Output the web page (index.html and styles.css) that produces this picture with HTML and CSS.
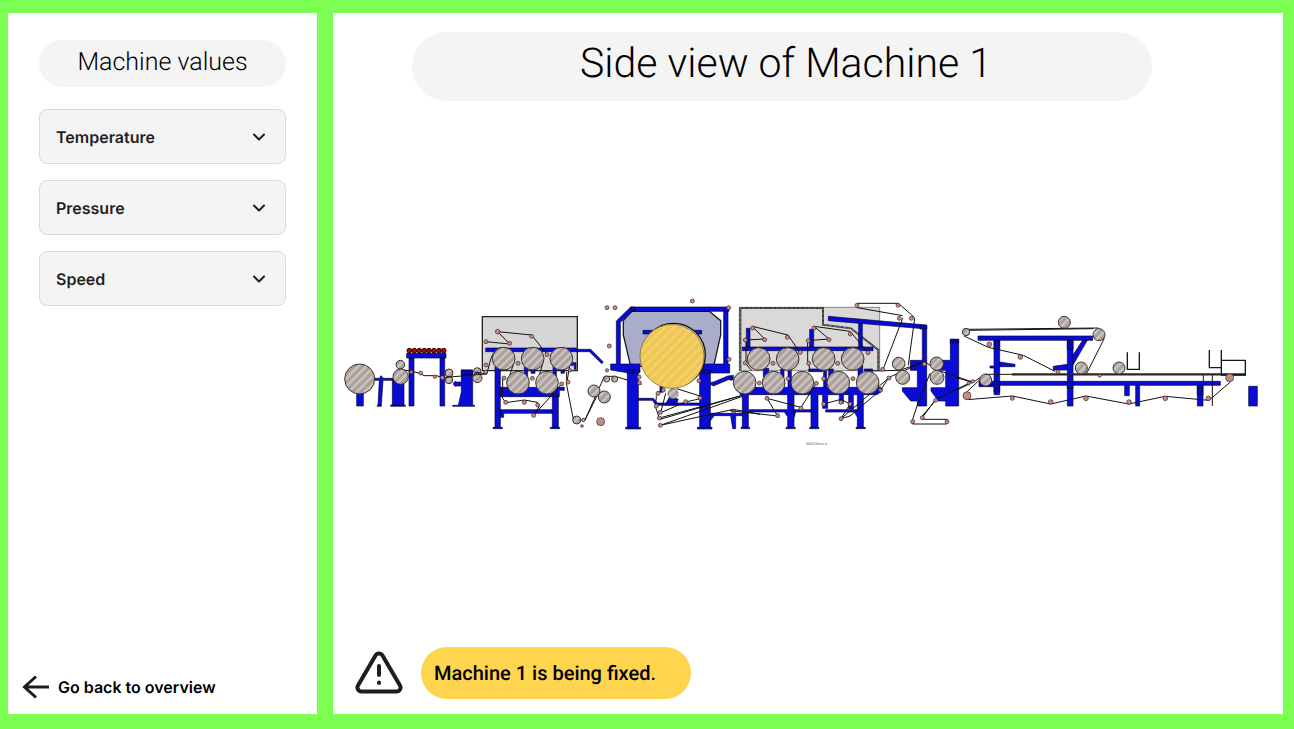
FILE: index.html
```html
<!DOCTYPE html>
<html lang="en">
<head>
<meta charset="utf-8">
<title>Machine 1</title>
<link rel="stylesheet" href="styles.css">
</head>
<body>
<div class="app">
  <aside class="panel sidebar">
    <h2 class="pill sidebar-title">Machine values</h2>
    <div class="values">
      <button class="value" type="button" aria-expanded="false">Temperature
        <svg class="chevron" viewBox="0 0 16 16"><path d="M3 5.5l5 5 5-5"/></svg></button>
      <button class="value" type="button" aria-expanded="false">Pressure
        <svg class="chevron" viewBox="0 0 16 16"><path d="M3 5.5l5 5 5-5"/></svg></button>
      <button class="value" type="button" aria-expanded="false">Speed
        <svg class="chevron" viewBox="0 0 16 16"><path d="M3 5.5l5 5 5-5"/></svg></button>
    </div>
    <a class="back" href="#overview">
      <svg class="arrow" viewBox="0 0 28 26"><path d="M27 13H3M14 2.5L2.5 13 14 23.500"/></svg>
      Go back to overview</a>
  </aside>
  <main class="panel view">
    <h1 class="pill view-title">Side view of Machine 1</h1>
    <div class="stage">
      <svg class="machine" viewBox="0 0 2775 507" role="img" aria-label="Side view drawing of the machine">
        <defs>
          <pattern id="hatch" width="17" height="17" patternUnits="userSpaceOnUse" patternTransform="rotate(45)">
            <rect width="17" height="17" fill="#cec4bf"/><path d="M3 0V17M8 0V17" stroke="#544d4a" stroke-width="1.500"/>
          </pattern>
          <pattern id="gold" width="20" height="20" patternUnits="userSpaceOnUse" patternTransform="rotate(45)">
            <rect width="20" height="20" fill="#f7d060"/><path d="M3 0V20M9 0V20" stroke="#c9a646" stroke-width="1.500"/>
          </pattern>
          <pattern id="pink" width="6" height="6" patternUnits="userSpaceOnUse" patternTransform="rotate(45)">
            <rect width="6" height="6" fill="#dba19d"/><path d="M2 0V6" stroke="#7a4a48" stroke-width="1.500"/>
          </pattern>
          <pattern id="dark" width="8" height="8" patternUnits="userSpaceOnUse" patternTransform="rotate(45)">
            <rect width="8" height="8" fill="#0b0bd6"/><path d="M2 0V8" stroke="#000040" stroke-width="2"/>
          </pattern>
        </defs>

        <!-- unwind stand and roof frame -->
        <g>
          <g class="steel">
            <path d="M50 305h20v43H50zM103 265h15l5-8 8 8h28v6h-30l-5 75h-10l4-75h-15zM157 270h35v76h-35zM152 345h44v4h-44zM112 345h12v4h-12z"/>
            <path d="M200 190h118v14H200zM207 204h15v144h-15zM300 204h14v144h-14zM364 240h34v106h6v3h-66v-3h17l9-40v-18h-14c-12 6-12-20 0-12h14z"/>
          </g>
          <path class="hatched" d="M364 240h34v14h-34z"/>
          <g class="red"><circle cx="208" cy="182" r="7"/><circle cx="223" cy="182" r="7"/><circle cx="238" cy="182" r="7"/><circle cx="253" cy="182" r="7"/><circle cx="267" cy="182" r="7"/><circle cx="282" cy="182" r="7"/><circle cx="297" cy="182" r="7"/><circle cx="311" cy="182" r="7"/></g>
          <g class="roll"><circle cx="59" cy="267" r="45"/><circle cx="181" cy="224" r="13"/><circle cx="182" cy="260" r="23"/><circle cx="327" cy="249" r="12"/><circle cx="327" cy="270" r="11"/><circle cx="412" cy="244" r="11"/><circle cx="412" cy="264" r="14"/></g>
          <path class="web" d="M192 240L213 243 240 250 252 257H290L307 263 412 254 440 252"/>
          <g class="idler"><circle cx="214" cy="246" r="5"/><circle cx="242" cy="249" r="6"/><circle cx="285" cy="260" r="5"/><circle cx="307" cy="263" r="6"/></g>
        </g>

        <!-- first dryer section -->
        <g transform="translate(405 0)">
          <path class="hood" d="M22 80H307V242H22z"/>
          <g class="steel">
            <path d="M32 174H304V185H32zM304 178H347L385 216 380 221 343 185H304zM60 230H76V412H60zM54 412h28v4H54zM232 315H250V412H232zM226 412h28v4h-28zM76 292H268V301H253V320H76zM76 359H232V370H115V370H86V382H76zM148 230h10v40h-10zM234 230h10v40h-10zM258 240h10v10h-10zM168 240h12v10h-12zM285 218h18v20h-5v-12h-13z"/>
          </g>
          <path class="web" d="M32 155L104 162 68 125 170 135 216 193 M0 246L35 252 48 205Q60 172 86 172M83 265V325L92 338 148 330 188 337 192 350 176 376 260 282M116 220L97 278M203 220L187 278M275 245V285L295 388M330 390L370 310M330 390L388 259H420L500 283M277 270L285 220"/>
          <g class="roll"><circle cx="86" cy="206" r="34"/><circle cx="173" cy="206" r="34"/><circle cx="259" cy="206" r="34"/><circle cx="129" cy="278" r="34"/><circle cx="216" cy="278" r="34"/><circle cx="357" cy="303" r="18"/><circle cx="388" cy="321" r="18"/><circle cx="305" cy="390" r="12"/><circle cx="325" cy="390" r="5"/><circle cx="395" cy="267" r="9"/><circle cx="419" cy="267" r="9"/></g>
          <g class="idler"><circle cx="33" cy="155" r="6"/><circle cx="68" cy="125" r="7"/><circle cx="104" cy="160" r="6"/><circle cx="170" cy="139" r="6"/><circle cx="216" cy="194" r="6"/><circle cx="33" cy="225" r="6"/><circle cx="32" cy="246" r="6"/><circle cx="129" cy="220" r="6"/><circle cx="87" cy="264" r="6"/><circle cx="172" cy="265" r="6"/><circle cx="285" cy="241" r="5"/><circle cx="260" cy="282" r="6"/><circle cx="279" cy="276" r="6"/><circle cx="92" cy="337" r="6"/><circle cx="148" cy="337" r="6"/><circle cx="188" cy="345" r="6"/><circle cx="176" cy="376" r="6"/><circle cx="321" cy="408" r="4"/><circle cx="377" cy="395" r="12"/><circle cx="396" cy="53" r="6"/><circle cx="420" cy="53" r="6"/><circle cx="403" cy="168" r="6"/><circle cx="396" cy="241" r="5"/></g>
        </g>

        <!-- main cylinder under repair -->
        <g transform="translate(780 0)">
          <path class="shell" d="M95 64H328L362 92V135L341 229H92L70 135V92z"/>
          <g class="steel">
            <path d="M92 51H387V64H97L61 97V222H120V248H82L32 240V222H49V93zM371 64H384V222H389V249H300V222H371zM129 121H305V132H129zM82 240H115V412H82zM77 412h45v5H77zM299 240H331V412H299zM292 412h44v5h-44zM115 325H160L172 339H298V346H168L157 331H115zM180 287h8v20h-8zM195 345L210 318 235 328 228 345zM331 278L343 275 383 258 400 256V270L385 269 340 288 331 283zM331 370H428V377H407V416H398L392 377H343L331 392z"/>
          </g>
          <path class="hatched" d="M82 240H100V250H82zM313 240H331V250H313zM92 51H104V64H92z"/>
          <circle class="shadow" cx="221" cy="195" r="95"/>
          <circle class="cylinder" cx="216" cy="199" r="96"/>
          <path class="web" d="M230 296L300 318 305 325 257 336 182 368M185 295L169 320 166 350 178 384M181 406L430 318M178 384L420 318M181 406L400 358 480 373M180 388L430 315M197 310L182 368"/>
          <circle class="plain" cx="219" cy="311" r="15"/>
          <g class="idler"><circle cx="277" cy="33" r="6"/><circle cx="386" cy="53" r="6"/><circle cx="387" cy="208" r="6"/><circle cx="117" cy="261" r="6"/><circle cx="118" cy="278" r="6"/><circle cx="190" cy="300" r="6"/><circle cx="174" cy="310" r="6"/><circle cx="297" cy="272" r="6"/><circle cx="300" cy="324" r="6"/><circle cx="257" cy="335" r="6"/><circle cx="169" cy="348" r="6"/><circle cx="181" cy="367" r="6"/><circle cx="178" cy="384" r="6"/><circle cx="181" cy="406" r="6"/><circle cx="401" cy="364" r="6"/></g>
        </g>

        <!-- second dryer section -->
        <g transform="translate(1170 0)">
          <path class="hood-light" d="M28 52H449V242H28z"/>
          <path class="wall" d="M31 242V54H279V104L363 115 445 180V242"/>
          <path class="wall-core" d="M31 242V54H279V104L363 115 445 180V242"/>
          <g class="steel">
            <path d="M37 171H429V182H37zM49 115H60V171H49zM239 118H251V171H239zM386 100H397V171H386zM295 79L590 105V117L295 92z"/>
            <path d="M30 292H453V306L440 314H400V412H382V382L373 366H287V359H382V314H370V357H356V314H340V340H328V314H293V355H278V314H264V412H243V314H192V412H173V380L163 366H57V359H173V314H55V412H37V314H30zM192 359H243V366H197L192 382zM33 412h26v4H33zM168 412h28v4h-28zM239 412h28v4h-28zM378 412h28v4h-28z"/>
            <path d="M100 235h16v26h-16zM152 237h10v26h-10zM174 242h10v50h-10zM236 237h42v8h-42zM281 242h9v50h-9zM296 237h14v26h-14zM384 225h14v38h-14zM403 237h25v6h-25zM0 260h6v10h-6z"/>
          </g>
          <path class="web" d="M48 220V150L104 147 67 109 174 135 210 188M233 218V152L297 147 252 109 360 124 414 187M47 220L65 242M236 220L240 242M111 325L213 352 259 280M111 325L143 378 0 362M281 342L333 328 360 342 333 386 475 265M333 386L360 378 452 300M381 40H505M381 53L518 77M505 40L554 83M518 85L460 236M554 85L535 225"/>
          <g class="roll"><circle cx="86" cy="207" r="34"/><circle cx="173" cy="207" r="34"/><circle cx="281" cy="207" r="34"/><circle cx="368" cy="207" r="34"/><circle cx="44" cy="278" r="34"/><circle cx="131" cy="278" r="34"/><circle cx="217" cy="278" r="34"/><circle cx="325" cy="278" r="34"/><circle cx="413" cy="278" r="34"/></g>
          <g class="idler"><circle cx="68" cy="114" r="6"/><circle cx="46" cy="150" r="6"/><circle cx="104" cy="149" r="6"/><circle cx="172" cy="142" r="6"/><circle cx="211" cy="187" r="6"/><circle cx="46" cy="219" r="6"/><circle cx="129" cy="220" r="6"/><circle cx="236" cy="220" r="6"/><circle cx="323" cy="220" r="6"/><circle cx="252" cy="114" r="6"/><circle cx="235" cy="152" r="6"/><circle cx="297" cy="149" r="6"/><circle cx="361" cy="132" r="6"/><circle cx="414" cy="188" r="6"/><circle cx="88" cy="279" r="6"/><circle cx="174" cy="266" r="6"/><circle cx="259" cy="280" r="6"/><circle cx="281" cy="266" r="6"/><circle cx="369" cy="266" r="6"/><circle cx="452" cy="300" r="6"/><circle cx="111" cy="325" r="6"/><circle cx="213" cy="355" r="6"/><circle cx="143" cy="377" r="6"/><circle cx="281" cy="342" r="6"/><circle cx="333" cy="337" r="6"/><circle cx="360" cy="342" r="6"/><circle cx="333" cy="386" r="6"/><circle cx="381" cy="46" r="6"/></g>
          <text class="caption" x="228" y="465">SECTION A-A</text>
        </g>

        <!-- press nips -->
        <g transform="translate(1530 0)">
          <g class="steel">
            <path d="M217 107H230V348H202V333H182L157 303V293H202V241H181V211H217zM301 148H326V348H287V333H265L243 303V293H287V241H270V211H301z"/>
          </g>
          <path class="hatched" d="M210 107H230V117H210zM301 148H326V159H301z"/>
          <path class="web" d="M60 243L150 241 223 215 262 240 370 277M92 300L117 262 223 215M240 250L202 345 188 388V402H291M217 383L257 328 357 280M217 388H291L293 400M257 331L215 380"/>
          <g class="roll"><circle cx="146" cy="221" r="19"/><circle cx="158" cy="262" r="21"/><circle cx="260" cy="221" r="20"/><circle cx="261" cy="262" r="21"/></g>
          <g class="idler"><circle cx="144" cy="46" r="6"/><circle cx="148" cy="85" r="6"/><circle cx="184" cy="85" r="6"/><circle cx="98" cy="238" r="6"/><circle cx="117" cy="264" r="6"/><circle cx="223" cy="222" r="6"/><circle cx="257" cy="331" r="6"/><circle cx="217" cy="383" r="6"/><circle cx="188" cy="395" r="6"/><circle cx="291" cy="395" r="6"/></g>
        </g>

        <!-- wire section -->
        <g transform="translate(1845 0)">
          <g class="steel">
            <path d="M69 138H413V151H69zM117 151H134V314H117zM337 151H354V348H337zM383 151H397L354 225V195zM134 216L180 223V230H134zM105 228H117V234H105zM337 223V240H295V229zM72 274H796V286H72zM72 286H115V290H72z"/>
            <path d="M509 286H523V317H509zM542 286H554V348H542zM727 286H744V348H727zM881 289H907V348H881z"/>
          </g>
          <path class="hatched" d="M117 151H134V178H117zM117 275H134V306H117zM337 151H354V178H337zM337 275H354V295H337zM727 286H744V314H727z"/>
          <path class="web" d="M27 138L100 172 205 196 300 244M30 118L430 114M34 121L415 116M448 145L394 252M0 262L53 277 92 253H170M36 318V305L92 253M10 298L53 277M36 329L172 318 287 342 393 318 521 342 630 319 762 331 826 276M772 255V348M745 255V286"/>
          <path class="wire" d="M170 253H872"/>
          <path class="frame" d="M517 187V238H553V187M763 180V233H799V180M799 211H871V255H799z"/>
          <g class="roll"><circle cx="33" cy="126" r="11"/><circle cx="328" cy="97" r="18"/><circle cx="432" cy="134" r="18"/><circle cx="379" cy="234" r="18"/><circle cx="492" cy="234" r="18"/><circle cx="92" cy="270" r="18"/></g>
          <g class="idler"><circle cx="103" cy="163" r="7"/><circle cx="196" cy="201" r="7"/><circle cx="309" cy="245" r="6"/><circle cx="434" cy="257" r="5"/><circle cx="41" cy="280" r="5"/><circle cx="53" cy="274" r="5"/><circle cx="36" cy="317" r="12"/><circle cx="172" cy="325" r="6"/><circle cx="287" cy="336" r="7"/><circle cx="393" cy="325" r="7"/><circle cx="522" cy="336" r="7"/><circle cx="631" cy="325" r="7"/><circle cx="760" cy="325" r="7"/><circle cx="824" cy="263" r="12"/></g>
        </g>
      </svg>
    </div>
    <div class="status" role="status">
      <svg class="warning" viewBox="0 0 48 44"><path d="M20.500 4.500L3 34.500a4 4 0 0 0 3.500 6h35a4 4 0 0 0 3.500-6L27.500 4.500a4 4 0 0 0-7 0zM24 15v9M24 31.500v.5"/></svg>
      <p class="status-text">Machine 1 is being fixed.</p>
    </div>
  </main>
</div>
</body>
</html>
```
FILE: styles.css
```css
* { box-sizing: border-box; }

body {
  margin: 0;
  background: #7aff52;
  font-family: Inter, "Liberation Sans", sans-serif;
  color: #1e1e1e;
  text-rendering: geometricPrecision;
}

.app {
  display: grid;
  grid-template-columns: 309px 1fr;
  gap: 16px;
  min-height: 100vh;
  padding: 13px 11px 15px 8px;
}

.panel {
  display: flex;
  flex-direction: column;
  background: #fff;
}

.pill {
  margin: 0;
  border-radius: 35px;
  background: #f4f4f4;
  color: #000;
  font-family: Roboto, sans-serif;
  font-weight: 300;
  text-align: center;
}

.sidebar { padding: 27px 31px 14px; }

.sidebar-title {
  padding-bottom: 1px;
  font-size: 25px;
  line-height: 46px;
}

.values {
  display: grid;
  gap: 16px;
  margin-top: 22px;
}

.value {
  display: flex;
  align-items: center;
  justify-content: space-between;
  height: 55px;
  padding: 0 18px 0 16px;
  border: 1px solid #d9d9d9;
  border-radius: 8px;
  background: #f4f4f4;
  color: #1e1e1e;
  font: 600 16px/22px Inter, sans-serif;
  text-rendering: inherit;
}

.chevron {
  width: 16px;
  height: 16px;
  fill: none;
  stroke: #1e1e1e;
  stroke-width: 2;
  stroke-linecap: round;
  stroke-linejoin: round;
}

.back {
  display: flex;
  align-items: center;
  gap: 8px;
  margin: auto -17px 0;
  color: #000;
  font-size: 16px;
  font-weight: 600;
  text-decoration: none;
}

.arrow {
  width: 28px;
  height: 26px;
  fill: none;
  stroke: #1d1b20;
  stroke-width: 3;
}

.view { padding: 19px 18px 15px 7px; }

.view-title {
  margin: 0 113px 0 72px;
  padding: 0 0 4px 8px;
  font-size: 41px;
  line-height: 65px;
}

.stage {
  display: flex;
  flex: 1;
  align-items: center;
}

.machine {
  display: block;
  width: 100%;
}

.status {
  display: flex;
  align-items: center;
  gap: 18px;
  padding-left: 15px;
}

.warning {
  width: 48px;
  height: 44px;
  fill: none;
  stroke: #1e1e1e;
  stroke-width: 4;
  stroke-linecap: round;
  stroke-linejoin: round;
}

.status-text {
  min-width: 270px;
  margin: 0;
  padding: 0 13px;
  border-radius: 26px;
  background: #ffd54f;
  color: #000;
  font: 500 20px/52px Roboto, sans-serif;
}

.steel { fill: #0b0bd6; stroke: #05053c; stroke-width: 2; }
.hatched { fill: url(#dark); stroke: #000030; stroke-width: 2; }
.hood { fill: #d6d6d6; stroke: #222; stroke-width: 4; }
.hood-light { fill: #dad9d8; stroke: #555; stroke-width: 2; }
.wall { fill: none; stroke: #333; stroke-width: 6; }
.wall-core { fill: none; stroke: #999; stroke-width: 2; stroke-dasharray: 10 4; }
.shell { fill: #a9adc9; stroke: #1c1c28; stroke-width: 4; }
.shadow { fill: #cec4bf; stroke: #111; stroke-width: 4; }
.cylinder { fill: url(#gold); stroke: #6b5a28; stroke-width: 2; }
.roll { fill: url(#hatch); stroke: #38332f; stroke-width: 3; }
.plain { fill: url(#hatch); stroke: #555; stroke-width: 2; }
.idler { fill: url(#pink); stroke: #3a2222; stroke-width: 2; }
.red { fill: #a30d0d; stroke: #2a0000; stroke-width: 3; }
.web { fill: none; stroke: #111; stroke-width: 3; }
.wire { fill: none; stroke: #26262c; stroke-width: 7; }
.frame { fill: none; stroke: #15151a; stroke-width: 4; }
.caption { fill: #333; font: 10px "Liberation Sans", sans-serif; }
```
